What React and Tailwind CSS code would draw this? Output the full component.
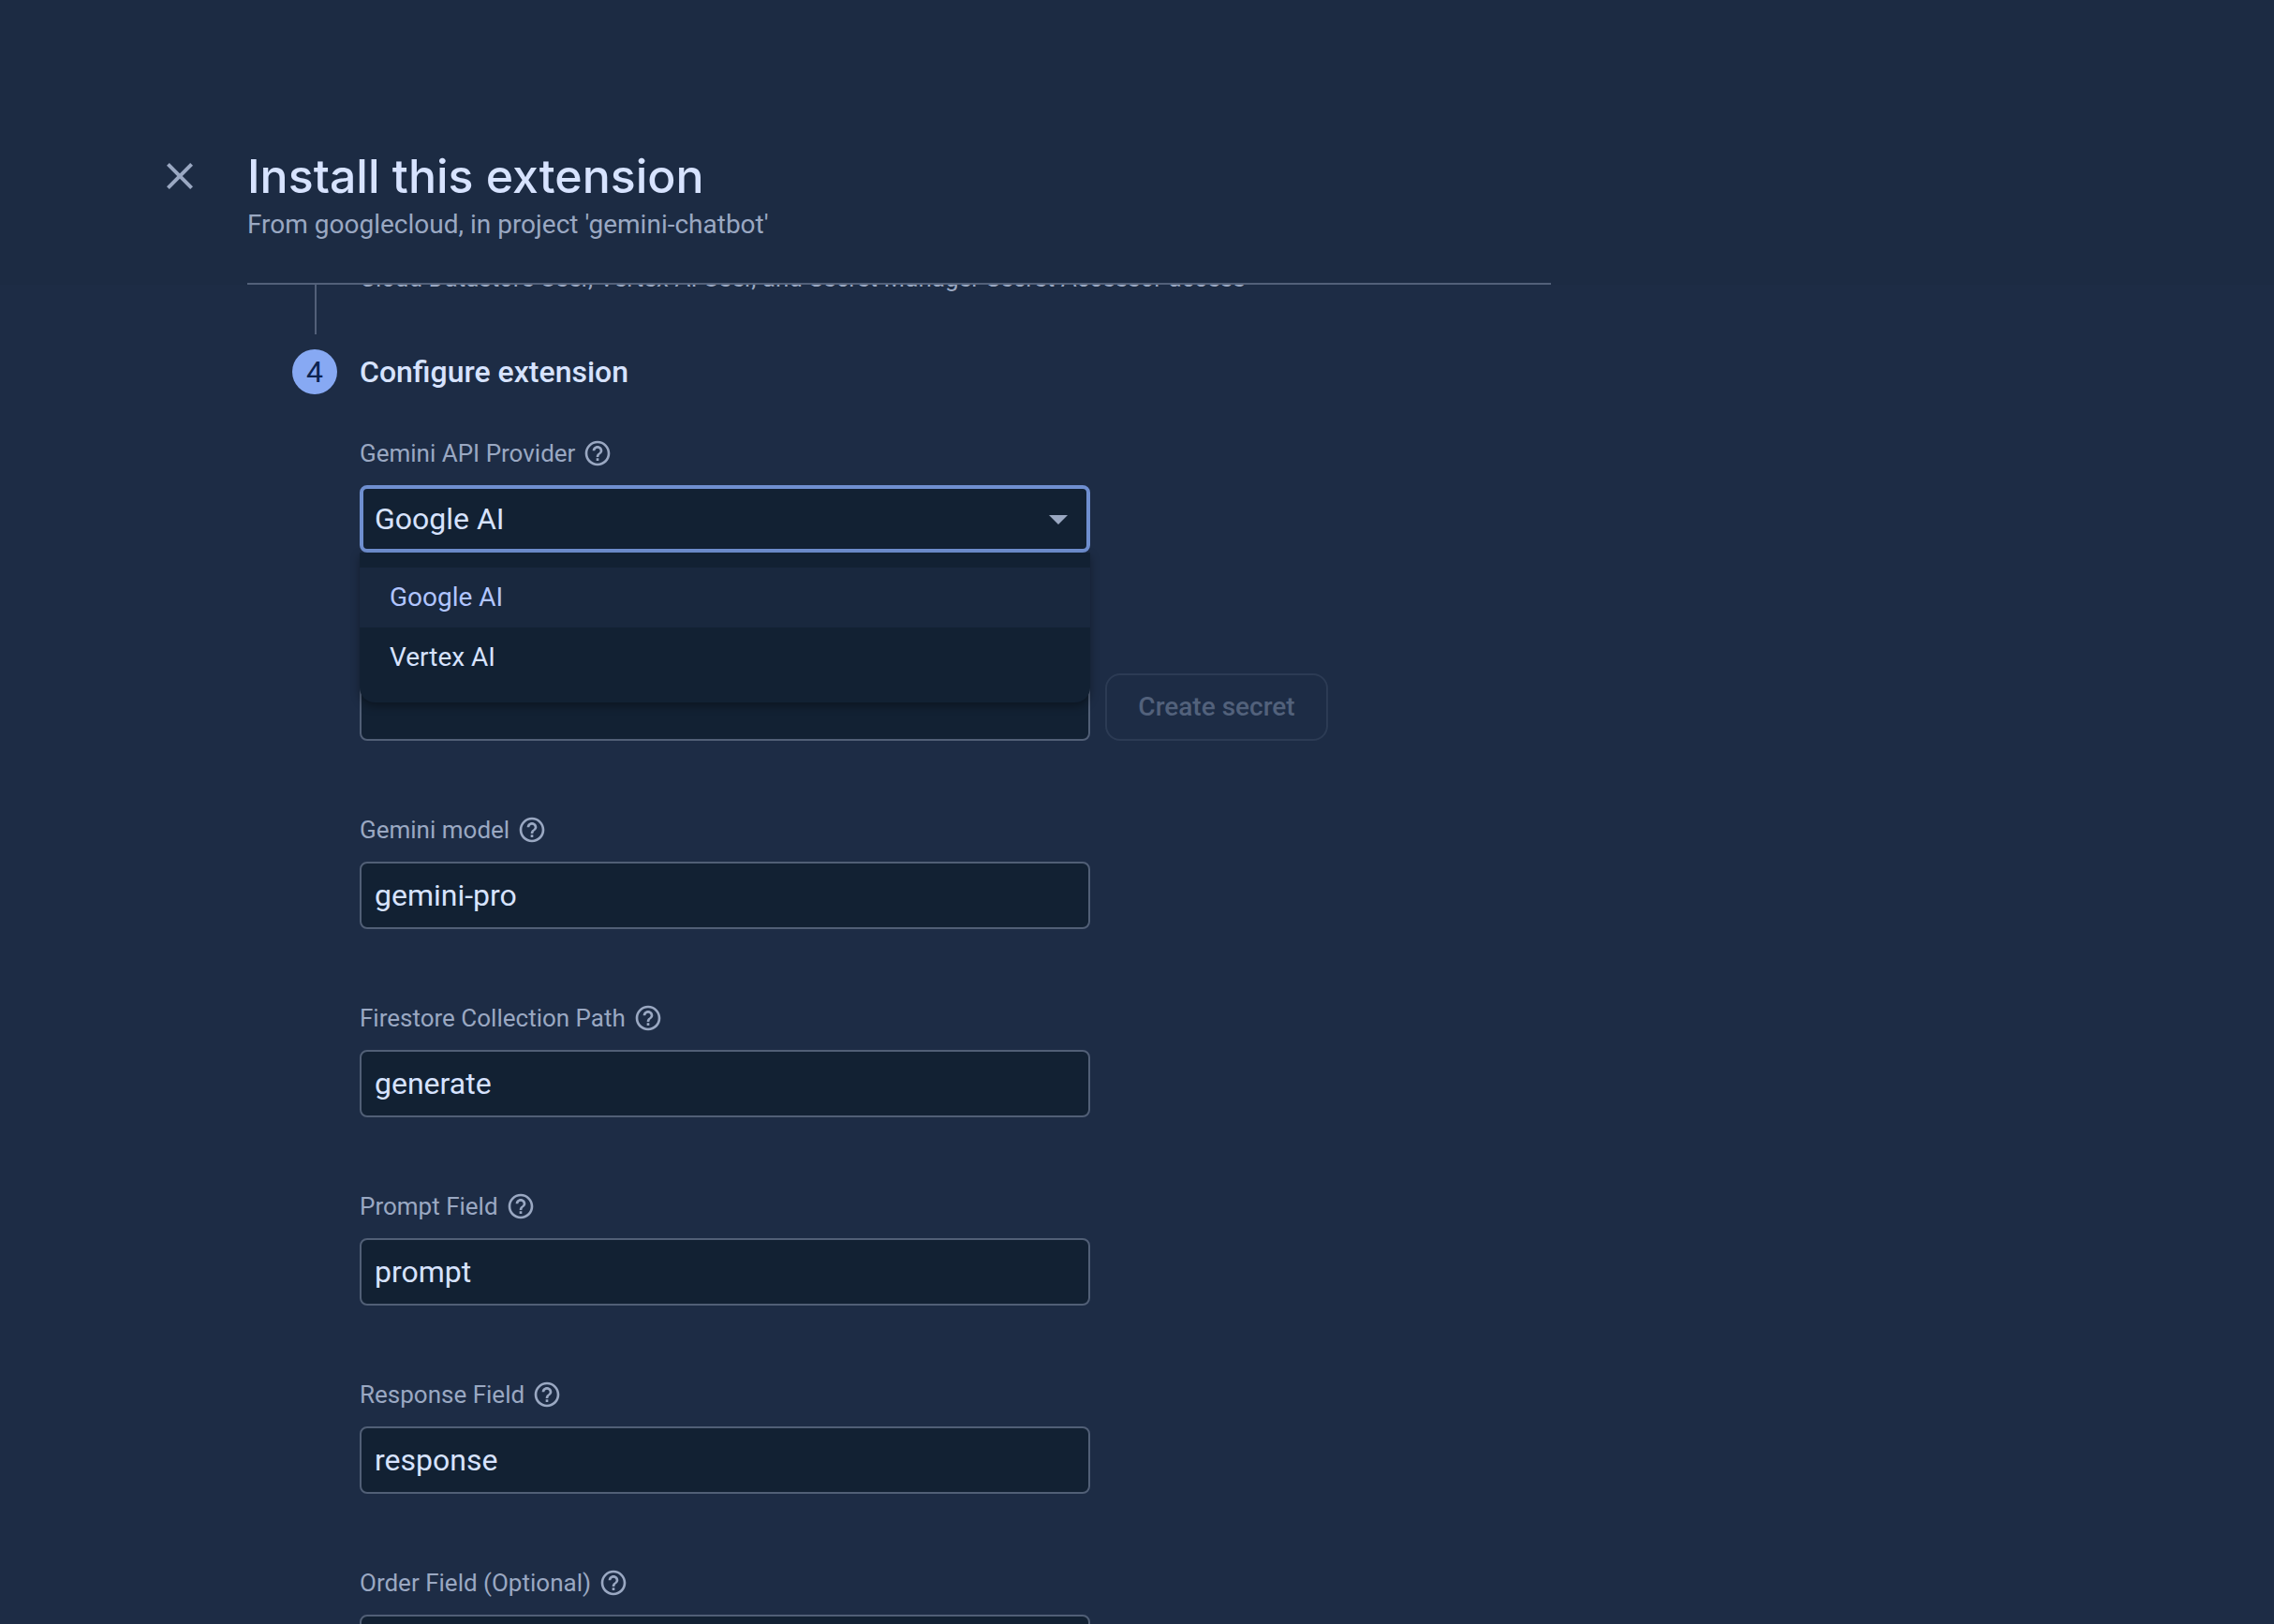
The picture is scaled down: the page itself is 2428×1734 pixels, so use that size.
import { useState } from 'react'
import { MdClose, MdHelpOutline } from 'react-icons/md'

const PROVIDERS = ['Google AI', 'Vertex AI']

const FIELDS = [
  { id: 'model', label: 'Gemini model', value: 'gemini-pro' },
  { id: 'collection', label: 'Firestore Collection Path', value: 'generate' },
  { id: 'prompt', label: 'Prompt Field', value: 'prompt' },
  { id: 'response', label: 'Response Field', value: 'response' },
  { id: 'order', label: 'Order Field (Optional)', value: '' },
]

const inputClass =
  'block h-[72px] w-[780px] rounded-lg border-2 border-[#515f76] bg-[#122133] px-3.5 text-[32px] text-[#d7e3ff] outline-none'

function FieldLabel({ id, children }) {
  return (
    <div className="mb-[18px] flex h-8 items-center gap-2 text-[#9aa8c2]">
      <label htmlFor={id} className="text-[26px] leading-8">{children}</label>
      <MdHelpOutline className="size-8" />
    </div>
  )
}

function ProviderField() {
  const [provider, setProvider] = useState('Google AI')

  return (
    <div>
      <FieldLabel id="provider">Gemini API Provider</FieldLabel>
      <div className="relative w-[780px]">
        <select
          id="provider"
          value={provider}
          onChange={(e) => setProvider(e.target.value)}
          className="block h-[72px] w-full appearance-none rounded-lg border-4 border-[#6f8fd0] bg-[#122133] px-3 text-[32px] text-[#d7e3ff] outline-none"
        >
          {PROVIDERS.map((p) => (
            <option key={p}>{p}</option>
          ))}
        </select>
        <svg className="pointer-events-none absolute top-8 right-6 h-2.5 w-5" viewBox="0 0 20 10" fill="#9aa8c2">
          <path d="M0 0h20L10 10z" />
        </svg>

        {/* Open menu */}
        <ul
          role="listbox"
          className="absolute top-full left-0 z-10 w-full rounded-b-2xl bg-[#122133] py-4 text-[28px] leading-[64px] shadow-[0_4px_10px_rgba(0,0,0,0.35)]"
        >
          {PROVIDERS.map((p) => (
            <li
              key={p}
              role="option"
              aria-selected={p === provider}
              onClick={() => setProvider(p)}
              className={p === provider ? 'bg-[#19283e] px-8 text-[#b1c5ff]' : 'px-8 text-[#d7e3ff]'}
            >
              {p}
            </li>
          ))}
        </ul>
      </div>
    </div>
  )
}

export default function App() {
  return (
    <div className="flex h-screen flex-col overflow-hidden bg-[#1d2c45] font-[Roboto,sans-serif]">
      {/* Header */}
      <header className="flex shrink-0 gap-12 bg-[#1c2b43] pt-40 pl-42">
        <button aria-label="Close" className="mt-1 size-12 self-start text-[#9aa8c2]">
          <MdClose className="size-12" />
        </button>
        <div className="w-full max-w-[1392px] border-b-2 border-[#526079] pb-[46px]">
          <h1 className="font-[Inter,sans-serif] text-[50px] leading-14 font-medium text-[#d7e3ff]">Install this extension</h1>
          <p className="mt-2 text-[28px] leading-8 text-[#9aa8c2]">From googlecloud, in project 'gemini-chatbot'</p>
        </div>
      </header>

      <main className="min-h-0 flex-1 overflow-hidden pl-78">
        {/* Tail of step 3 */}
        <div className="-mt-[23px] ml-6 flex h-[76px] border-l-2 border-[#526079] pl-[46px]">
          <p className="text-[26px] leading-8 text-[#9aa8c2]">
            Cloud Datastore User, Vertex AI User, and Secret Manager Secret Accessor access
          </p>
        </div>

        {/* Step 4 */}
        <div className="mt-4 flex h-12 items-center gap-6">
          <span className="flex size-12 items-center justify-center rounded-full bg-[#87a9f3] text-[32px] text-[#0b2350]">4</span>
          <h2 className="text-[32px] leading-10 font-medium text-[#d7e3ff]">Configure extension</h2>
        </div>

        <form className="mt-[47px] flex flex-col gap-[79px] pl-18">
          <ProviderField />

          <div className="flex gap-4 pt-[50px]">
            <input type="text" aria-label="API key" defaultValue="" className={inputClass} />
            <button
              type="button"
              disabled
              className="h-[72px] w-[238px] rounded-2xl border-2 border-[#2c3b54] text-[28px] font-medium text-[#52617b]"
            >
              Create secret
            </button>
          </div>

          {FIELDS.map((f) => (
            <div key={f.id}>
              <FieldLabel id={f.id}>{f.label}</FieldLabel>
              <input id={f.id} type="text" defaultValue={f.value} className={inputClass} />
            </div>
          ))}
        </form>
      </main>
    </div>
  )
}
